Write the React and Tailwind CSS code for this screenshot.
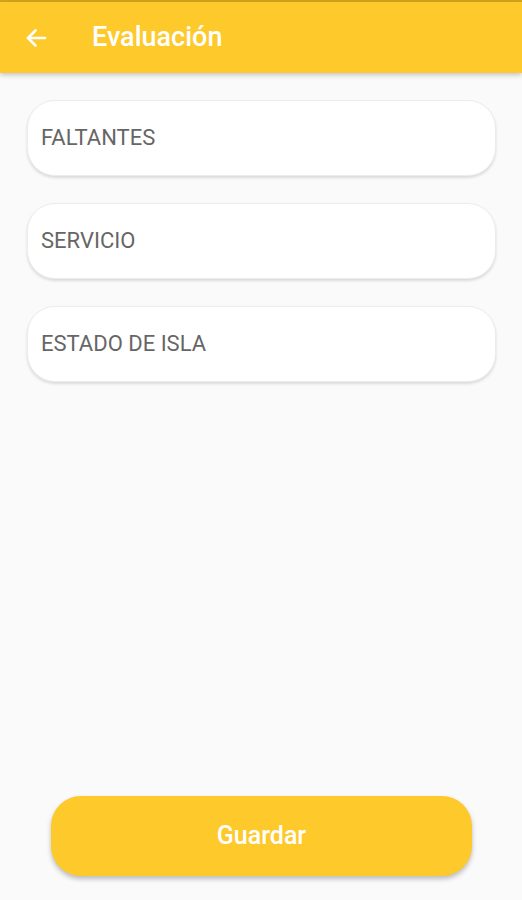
import React from 'react';

const fields = ['FALTANTES', 'SERVICIO', 'ESTADO DE ISLA'];

export default function App() {
    return (
        <div className="w-[522px] h-[900px] bg-[#fafafa] flex flex-col" style={{ fontFamily: 'Roboto, "Noto Sans", sans-serif' }}>
            {/* Status strip + app bar */}
            <div className="h-[2px] bg-[#d4a619]" />
            <header className="h-[71px] bg-[#fec92a] flex items-center shadow-[0_2px_5px_rgba(0,0,0,0.22)] relative z-10">
                <svg width="24" height="24" viewBox="0 0 24 24" className="ml-[24px]" fill="none" stroke="#fff" strokeWidth="2.6" strokeLinecap="round" strokeLinejoin="round">
                    <path d="M21 12H4" />
                    <path d="M11.5 4.5L4 12l7.5 7.5" />
                </svg>
                <h1 className="ml-[44px] text-white text-[27px] font-medium leading-none">Evaluación</h1>
            </header>

            {/* Fields */}
            <div className="flex flex-col gap-[27px] pt-[27px] px-[27px] pr-[26px]">
                {fields.map((f) => (
                    <div
                        key={f}
                        className="h-[76px] bg-white rounded-[28px] border border-[#ececec] shadow-[0_2px_3px_rgba(0,0,0,0.13)] flex items-center pl-[13px]"
                    >
                        <span className="text-[#666] text-[22px] leading-none">{f}</span>
                    </div>
                ))}
            </div>

            <div className="flex-1" />

            {/* Save button */}
            <div className="px-[51px] pr-[50px] pb-[24px]">
                <button
                    type="button"
                    className="w-full h-[80px] rounded-[30px] bg-[#fec92a] text-white text-[25px] font-medium shadow-[0_3px_5px_rgba(0,0,0,0.25)]"
                >
                    Guardar
                </button>
            </div>
        </div>
    );
}
